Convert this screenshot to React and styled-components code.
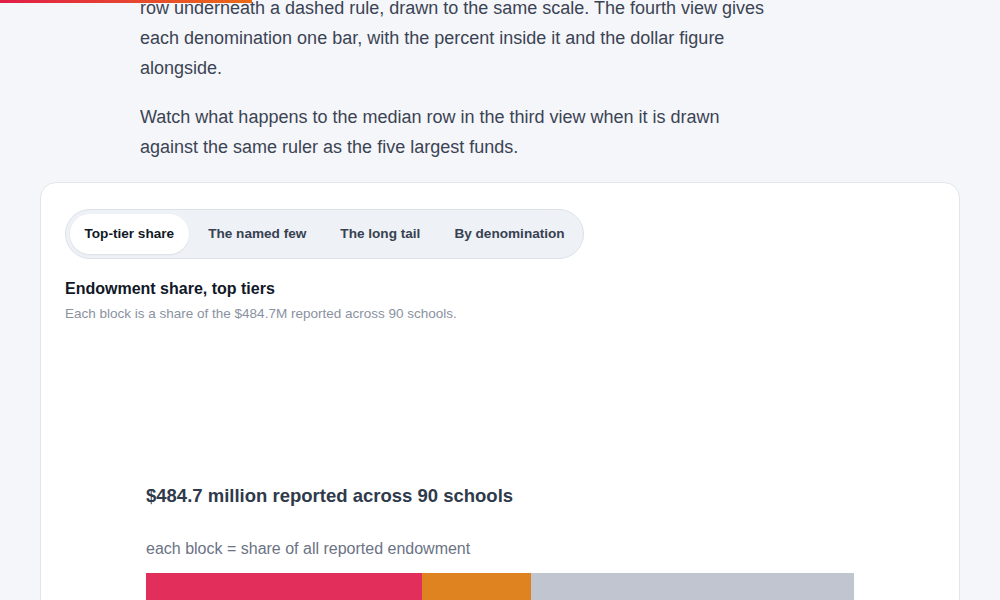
import React, { useState } from "react";
import styled, { createGlobalStyle } from "styled-components";

const GlobalStyle = createGlobalStyle`
  html, body {
    margin: 0;
    padding: 0;
    background: #f5f6f9;
    font-family: "Liberation Sans", Arial, sans-serif;
    color: #374151;
  }
`;

const Progress = styled.div`
  position: fixed;
  top: 0;
  left: 0;
  width: ${(p) => p.pct}%;
  height: 3px;
  background: linear-gradient(90deg, #e11d48, #ea6a17);
  z-index: 10;
`;

const Page = styled.main`
  width: 920px;
  margin: 0 auto;
`;

const Prose = styled.div`
  margin: -7px 0 0 100px;
  max-width: 640px;
`;

const Para = styled.p`
  margin: 0 0 19px;
  font-size: 18px;
  line-height: 30px;
  color: #3b4454;
`;

const Card = styled.section`
  background: #fff;
  border: 1px solid #e2e5ea;
  border-radius: 16px;
  padding: 26px 24px 0;
  margin-top: 20px;
  min-height: 440px;
`;

const Tabs = styled.div`
  display: inline-flex;
  gap: 5px;
  padding: 4px;
  border: 1px solid #dde1e8;
  border-radius: 999px;
  background: #eef1f6;
`;

const Tab = styled.button`
  height: 40px;
  padding: 0 14.5px 1px;
  border: 0;
  border-radius: 999px;
  font-family: inherit;
  font-size: 13.6px;
  font-weight: 700;
  cursor: pointer;
  background: ${(p) => (p.active ? "#fff" : "transparent")};
  color: ${(p) => (p.active ? "#111827" : "#374151")};
  box-shadow: ${(p) => (p.active ? "0 1px 2px rgba(15, 23, 42, 0.08)" : "none")};
`;

const Title = styled.h3`
  margin: 20px 0 0;
  font-size: 16px;
  line-height: 20px;
  font-weight: 700;
  color: #111827;
`;

const Sub = styled.p`
  margin: 6px 0 0;
  font-size: 13.5px;
  line-height: 17px;
  color: #8a92a0;
`;

const Chart = styled.svg`
  display: block;
  width: 100%;
  height: 400px;
  margin-top: 8px;
  font-family: "Liberation Sans", Arial, sans-serif;
`;

const tabs = ["Top-tier share", "The named few", "The long tail", "By denomination"];

// share of $484.7M, scaled to a 708px bar
const blocks = [
  { w: 276, color: "#e22e5a" },
  { w: 109, color: "#df8320" },
  { w: 323, color: "#c1c5cf" },
];

function ShareBar() {
  let x = 81;
  return (
    <Chart viewBox="0 0 870 400">
      <text x="81" y="172" fontSize="18.5" fontWeight="700" fill="#2f3a4b">
        $484.7 million reported across 90 schools
      </text>
      <text x="81" y="224" fontSize="16" fill="#6b7385">
        each block = share of all reported endowment
      </text>
      {blocks.map((b, i) => {
        const rect = <rect key={i} x={x} y="243" width={b.w} height="60" fill={b.color} />;
        x += b.w;
        return rect;
      })}
    </Chart>
  );
}

export default function App() {
  const [active, setActive] = useState(0);
  return (
    <>
      <GlobalStyle />
      <Progress pct={25.2} />
      <Page>
        <Prose>
          <Para>
            row underneath a dashed rule, drawn to the same scale. The fourth view gives
            each denomination one bar, with the percent inside it and the dollar figure
            alongside.
          </Para>
          <Para>
            Watch what happens to the median row in the third view when it is drawn
            against the same ruler as the five largest funds.
          </Para>
        </Prose>
        <Card>
          <Tabs>
            {tabs.map((t, i) => (
              <Tab key={t} active={i === active} onClick={() => setActive(i)}>
                {t}
              </Tab>
            ))}
          </Tabs>
          <Title>Endowment share, top tiers</Title>
          <Sub>Each block is a share of the $484.7M reported across 90 schools.</Sub>
          <ShareBar />
        </Card>
      </Page>
    </>
  );
}
